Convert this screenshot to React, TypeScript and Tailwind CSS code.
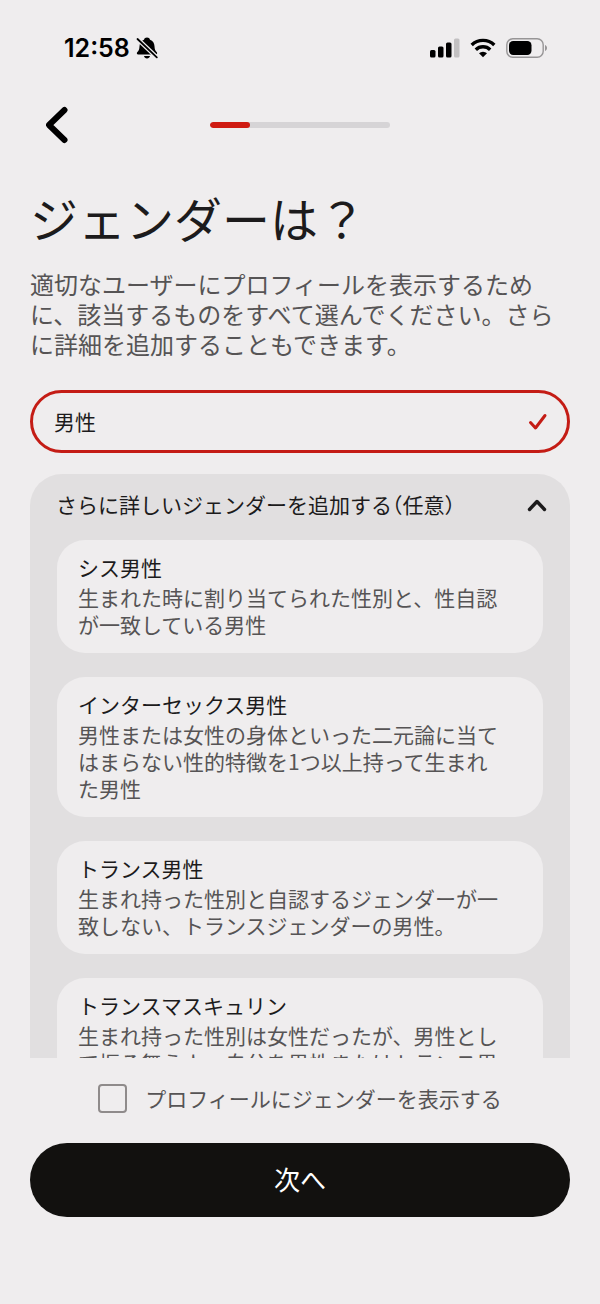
import React, { useState } from "react";

interface GenderDetail {
  id: string;
  title: string;
  description: string;
}

const details: GenderDetail[] = [
  {
    id: "cis-man",
    title: "シス男性",
    description: "生まれた時に割り当てられた性別と、性自認が一致している男性",
  },
  {
    id: "intersex-man",
    title: "インターセックス男性",
    description:
      "男性または女性の身体といった二元論に当てはまらない性的特徴を1つ以上持って生まれた男性",
  },
  {
    id: "trans-man",
    title: "トランス男性",
    description:
      "生まれ持った性別と自認するジェンダーが一致しない、トランスジェンダーの男性。",
  },
  {
    id: "transmasculine",
    title: "トランスマスキュリン",
    description:
      "生まれ持った性別は女性だったが、男性として振る舞う人、自分を男性またはトランス男性と認識している人",
  },
];

// Status bar icons
const BellOffIcon = () => (
  <svg width="22" height="22" viewBox="0 0 22 22" aria-hidden="true">
    <path
      d="M11 0.5c-1.500 0-2.700.9-3 2.200C5 3.800 3.600 6.200 3.500 9.300c-.1 3-.7 4.300-2.100 5.700-1 1-.6 2.600.8 2.600h17.600c1.400 0 1.800-1.600.8-2.600-1.400-1.400-2-2.700-2.100-5.700-.1-3.100-1.500-5.500-4.500-6.600-.3-1.300-1.500-2.200-3-2.200z"
      fill="#000"
    />
    <path d="M8 19h6c-.3 1.600-1.500 2.500-3 2.500S8.300 20.600 8 19z" fill="#000" />
    <path d="M0.500 1 21.500 21" stroke="#efedee" strokeWidth="4.400" />
    <path d="M1.500 2 20.800 20.300" stroke="#000" strokeWidth="1.800" strokeLinecap="round" />
  </svg>
);

const SignalIcon = () => (
  <svg width="30" height="20" viewBox="0 0 30 20" aria-hidden="true">
    <rect x="0" y="12" width="5.500" height="7.500" rx="1.500" />
    <rect x="8" y="8.500" width="5.500" height="11" rx="1.500" />
    <rect x="16" y="4.500" width="5.500" height="15" rx="1.500" />
    <rect x="24" y="0.500" width="5.500" height="19" rx="1.500" fill="#c2c0c1" />
  </svg>
);

const WifiIcon = () => (
  <svg width="26" height="20" viewBox="0 0 26 20" aria-hidden="true">
    <g fill="none" stroke="#000" strokeWidth="3.400">
      <path d="M1.700 7a16.200 16.200 0 0 1 22.600 0" />
      <path d="M5.800 11.700a10.200 10.200 0 0 1 14.400 0" />
    </g>
    <path d="M13 19.300 9 15.300a5.700 5.700 0 0 1 8 0z" />
  </svg>
);

const BatteryIcon = () => (
  <svg width="42" height="20" viewBox="0 0 42 20" aria-hidden="true">
    <rect x="0.800" y="0.800" width="36.400" height="18.400" rx="6" fill="none" stroke="#979596" strokeWidth="1.400" />
    <rect x="3" y="3" width="22.500" height="14" rx="4.200" />
    <path d="M39 7v6c1.300-.5 2-1.700 2-3s-.7-2.500-2-3z" fill="#979596" />
  </svg>
);

const StatusBar = () => (
  <div className="flex h-24 shrink-0 items-center justify-between pr-[52px] pl-16">
    <div className="flex items-center gap-[6px]">
      <span className="font-['Inter',sans-serif] text-[25px] leading-8 font-semibold text-black">
        12:58
      </span>
      <BellOffIcon />
    </div>
    <div className="flex items-center gap-[10px]">
      <SignalIcon />
      <WifiIcon />
      <BatteryIcon />
    </div>
  </div>
);

const App: React.FC = () => {
  const [expanded, setExpanded] = useState(true);
  const [selected, setSelected] = useState(true);
  const [showOnProfile, setShowOnProfile] = useState(false);

  return (
    <div
      lang="ja"
      className="flex h-dvh flex-col bg-[#efedee] font-['Noto_Sans_CJK_JP',sans-serif] text-[21px] text-[#1c1b1c]"
    >
      <StatusBar />

      <header className="grid h-[58px] shrink-0 grid-cols-[1fr_180px_1fr] items-center px-[30px]">
        <button type="button" aria-label="戻る" className="w-12 pl-4">
          <svg width="24" height="38" viewBox="0 0 24 38" fill="none" aria-hidden="true">
            <path
              d="M18.500 4 3 19 18.500 34"
              stroke="#000"
              strokeWidth="6"
              strokeLinecap="round"
              strokeLinejoin="round"
            />
          </svg>
        </button>
        <div
          role="progressbar"
          aria-label="進捗"
          aria-valuenow={22}
          className="h-[6px] overflow-hidden rounded-full bg-[#d6d4d6]"
        >
          <div className="h-full w-[22%] rounded-full bg-[#cf1b12]" />
        </div>
      </header>

      <main className="min-h-0 flex-1 overflow-y-auto px-[30px] pt-7 [scrollbar-width:none]">
        <h1 className="text-[48px] leading-[70px]">ジェンダーは？</h1>
        <p className="mt-[17px] text-[24px] leading-[30px] text-[#565455]">
          適切なユーザーにプロフィールを表示するために、該当するものをすべて選んでください。さらに詳細を追加することもできます。
        </p>

        <button
          type="button"
          aria-pressed={selected}
          onClick={() => setSelected(!selected)}
          className="mt-[31px] flex h-[63px] w-full items-center justify-between rounded-full border-3 border-[#c41c15] pr-[19px] pl-[21px]"
        >
          <span>男性</span>
          {selected && (
            <svg width="20" height="18" viewBox="0 0 20 18" fill="none" aria-hidden="true">
              <path
                d="m2.500 9.500 5 5.500 9.500-12.500"
                stroke="#c41c15"
                strokeWidth="3"
                strokeLinecap="round"
                strokeLinejoin="round"
              />
            </svg>
          )}
        </button>

        <section className="mt-[21px] rounded-t-[32px] bg-[#e1dfe0] pb-6">
          <button
            type="button"
            aria-expanded={expanded}
            onClick={() => setExpanded(!expanded)}
            className="mb-1 flex h-[62px] w-full items-center justify-between pr-[23px] pl-[26px]"
          >
            <span className="[font-feature-settings:'halt']">
              さらに詳しいジェンダーを追加する（任意）
            </span>
            <svg width="20" height="14" viewBox="0 0 20 14" fill="none" aria-hidden="true">
              <path
                d="M2.500 11.500 10 3.500l7.500 8"
                stroke="#1c1b1c"
                strokeWidth="3.400"
                strokeLinecap="round"
                strokeLinejoin="round"
              />
            </svg>
          </button>
          {expanded && (
            <div className="flex flex-col gap-6 px-[27px]">
              {details.map((detail) => (
                <button
                  key={detail.id}
                  type="button"
                  className="rounded-[28px] bg-[#efedee] pt-3 pr-9 pb-[15px] pl-[21px] text-left"
                >
                  <span className="mb-[2px] block leading-[30px]">{detail.title}</span>
                  <span className="block leading-[27px] text-[#565455]">{detail.description}</span>
                </button>
              ))}
            </div>
          )}
        </section>
      </main>

      <footer className="shrink-0 px-[30px] pt-6 pb-[87px]">
        <label className="flex items-center justify-center gap-[18px] leading-8 text-[#565455]">
          <input
            type="checkbox"
            checked={showOnProfile}
            onChange={(e) => setShowOnProfile(e.target.checked)}
            className="size-[29px] appearance-none rounded-[4px] border-2 border-[#8f8b8b] checked:bg-[#c41c15]"
          />
          プロフィールにジェンダーを表示する
        </label>
        <button
          type="button"
          className="mt-[29px] h-[74px] w-full rounded-full bg-[#12110f] pb-[3px] text-[26px] text-white"
        >
          次へ
        </button>
      </footer>
    </div>
  );
};

export default App;
